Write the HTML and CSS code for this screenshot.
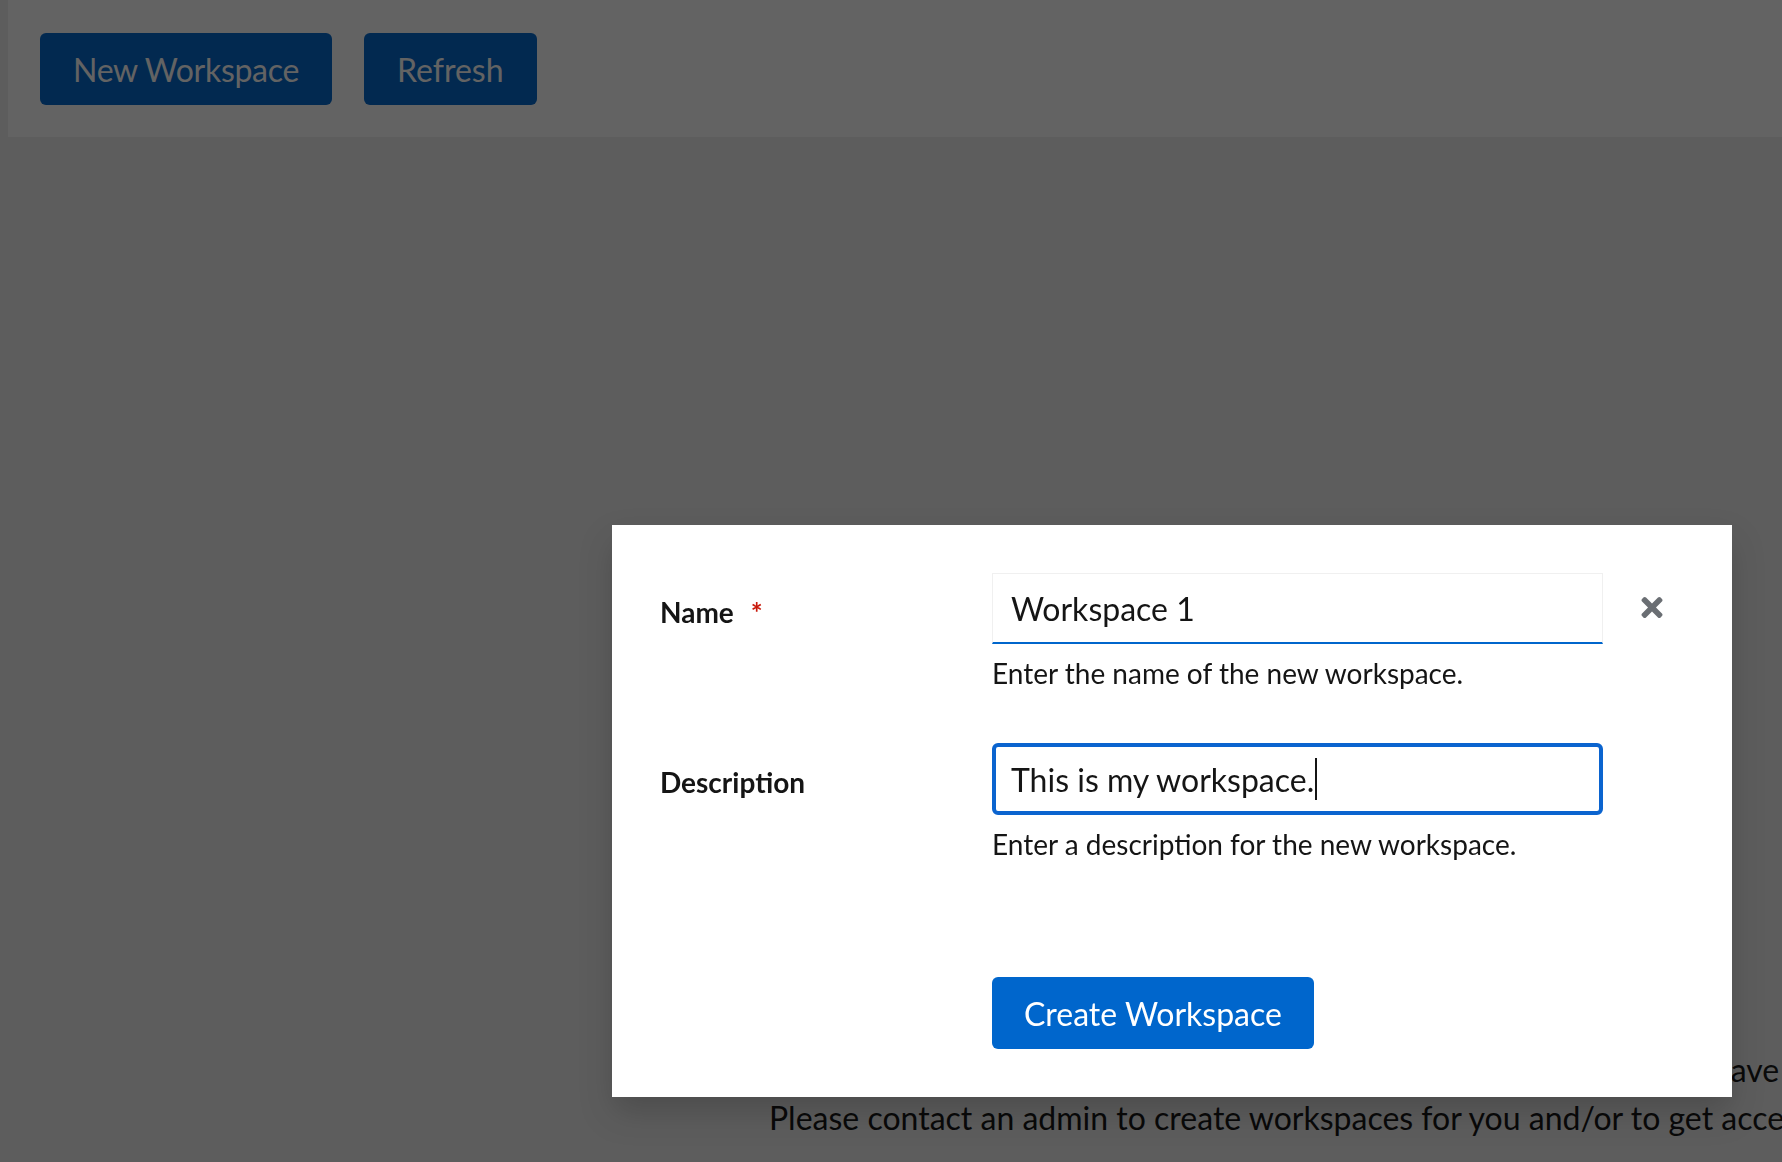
FILE: index.html
```
<!DOCTYPE html>
<html lang="en">
<head>
<meta charset="utf-8">
<title>Workspaces</title>
<link rel="stylesheet" href="styles.css">
</head>
<body>
<div class="page">
  <div class="toolbar">
    <button class="btn btn-wide" type="button">New Workspace</button>
    <button class="btn" type="button">Refresh</button>
  </div>
  <main class="empty">
    <p class="empty-line first">It looks like there are no workspaces yet, or you don't have access to any of them.</p>
    <p class="empty-line">Please contact an admin to create workspaces for you and/or to get access to existing ones.</p>
  </main>
</div>

<div class="backdrop">
  <div class="modal" role="dialog" aria-modal="true">
    <form class="form">
      <label class="label">Name<span class="req">*</span></label>
      <div class="field">
        <div class="input">Workspace 1</div>
        <div class="helper">Enter the name of the new workspace.</div>
      </div>
      <button class="close" type="button" aria-label="Close">
        <svg viewBox="0 80 352 352" width="22" height="21" aria-hidden="true"><path fill="currentColor" d="M242.72 256l100.07-100.07c12.28-12.28 12.28-32.190 0-44.48l-22.24-22.24c-12.28-12.28-32.19-12.28-44.48 0L176 189.28 75.930 89.21c-12.28-12.28-32.19-12.28-44.48 0L9.21 111.45c-12.28 12.28-12.28 32.19 0 44.48L109.28 256 9.21 356.07c-12.28 12.280-12.28 32.19 0 44.48l22.24 22.24c12.28 12.28 32.2 12.28 44.48 0L176 322.72l100.07 100.07c12.28 12.28 32.2 12.28 44.48 0l22.24-22.24c12.28-12.28 12.28-32.19 0-44.48L242.72 256z"/></svg>
      </button>

      <label class="label">Description</label>
      <div class="field">
        <div class="input focused">This is my workspace.<span class="caret"></span></div>
        <div class="helper">Enter a description for the new workspace.</div>
      </div>
      <div></div>

      <div></div>
      <div class="actions">
        <button class="primary" type="button">Create Workspace</button>
      </div>
      <div></div>
    </form>
  </div>
</div>
</body>
</html>
```

FILE: styles.css
```
html, body {
  margin: 0;
  padding: 0;
}

body {
  background: #f0f0f0;
  font-family: Lato, "Liberation Sans", sans-serif;
  color: #151515;
  overflow: hidden;
  width: 1782px;
  height: 1162px;
}

.page {
  width: 100%;
  height: 100%;
}

.toolbar {
  margin-left: 8px;
  height: 137px;
  box-sizing: border-box;
  padding: 33px 32px;
  display: flex;
  gap: 32px;
  background: #ffffff;
}

.btn {
  height: 72px;
  padding: 0 33px;
  border: 0;
  border-radius: 6px;
  background: #0066cc;
  color: #ffffff;
  font-family: inherit;
  font-size: 32px;
}

.btn-wide {
  letter-spacing: -0.3px;
}

.empty {
  padding: 909px 0 0 769px;
  white-space: nowrap;
}

.empty-line {
  margin: 0;
  font-size: 32px;
  line-height: 48px;
}

.empty-line.first {
  margin-left: 192px;
}

.backdrop {
  position: fixed;
  inset: 0;
  background: rgba(3, 3, 3, 0.62);
}

.modal {
  position: absolute;
  left: 612px;
  top: 525px;
  width: 1120px;
  box-sizing: border-box;
  padding: 48px;
  background: #ffffff;
  box-shadow: 0 16px 32px rgba(3, 3, 3, 0.18);
}

.form {
  display: grid;
  grid-template-columns: 332px 611px 1fr;
  row-gap: 49px;
  align-items: start;
}

.label {
  padding-top: 18px;
  font-size: 28px;
  line-height: 42px;
  font-weight: 700;
}

.req {
  margin-left: 17px;
  color: #c9190b;
  font-weight: 700;
}

.input {
  height: 71px;
  box-sizing: border-box;
  padding: 0 18px;
  border: 1px solid #f0f0f0;
  border-bottom: 2px solid #0066cc;
  display: flex;
  align-items: center;
  font-size: 32px;
  color: #151515;
  background: #ffffff;
}

.input.focused {
  height: 72px;
  border: 4px solid #0b64cf;
  border-radius: 6px;
  padding: 0 15px;
}

.caret {
  display: inline-block;
  width: 2px;
  height: 42px;
  margin-left: 1px;
  background: #151515;
}

.helper {
  margin-top: 8px;
  font-size: 28px;
  line-height: 42px;
  color: #151515;
}

.close {
  margin: 24px 0 0 38px;
  padding: 0;
  width: 22px;
  height: 21px;
  border: 0;
  background: none;
  color: #6a6e73;
  justify-self: start;
  display: flex;
}

.actions {
  margin-top: 63px;
}

.primary {
  height: 72px;
  padding: 0 32px;
  border: 0;
  border-radius: 6px;
  background: #0066cc;
  color: #ffffff;
  font-family: inherit;
  font-size: 32px;
}
```
